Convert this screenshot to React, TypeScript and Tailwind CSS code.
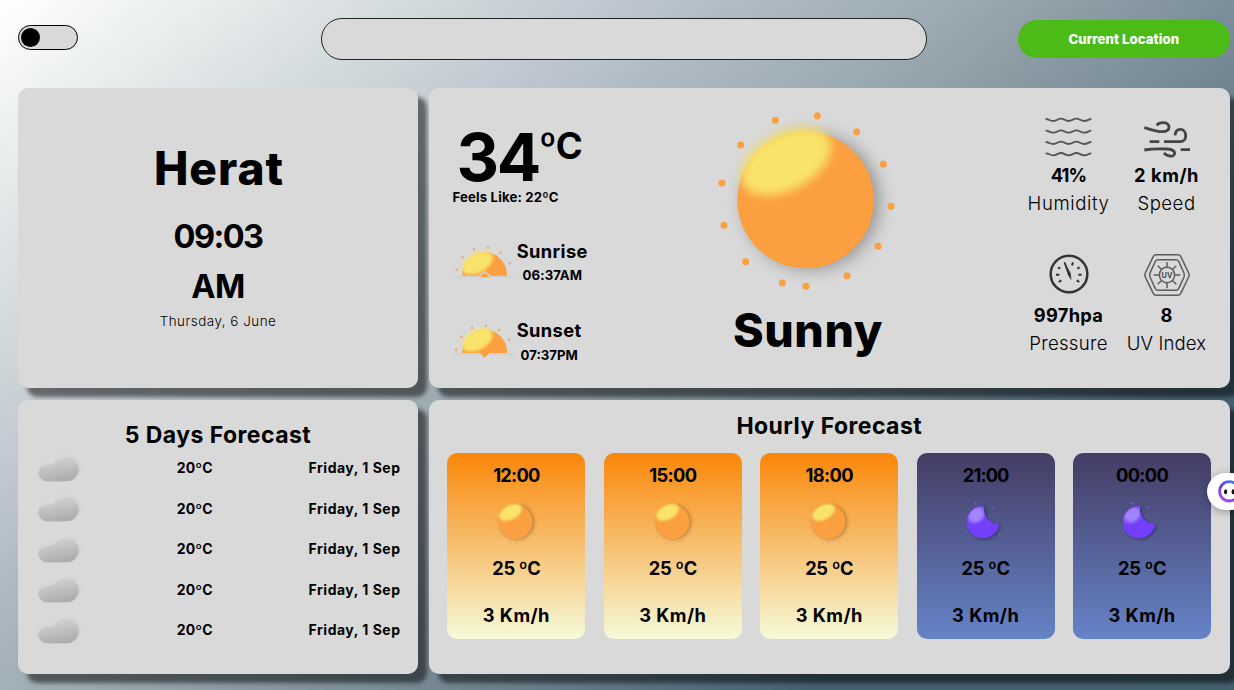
import React from "react";

type Size = { className?: string };

const SUN_RAYS: [number, number][] = [
  [226, 91], [352, 77], [470, 125], [550, 223], [573, 349], [534, 469],
  [441, 557], [318, 589], [247, 579], [137, 515], [72, 406], [66, 279], [122, 165],
];

function Sun({ id, className = "" }: Size & { id: string }) {
  return (
    <svg viewBox="24 30 600 600" className={className} aria-hidden="true">
      <defs>
        <filter id={`${id}-blur`} x="-40%" y="-40%" width="180%" height="180%">
          <feGaussianBlur stdDeviation="14" />
        </filter>
        <filter id={`${id}-shade`} x="-40%" y="-40%" width="180%" height="180%">
          <feGaussianBlur stdDeviation="26" />
        </filter>
      </defs>
      <circle cx="334" cy="334" r="202" fill="#000" opacity="0.34" filter={`url(#${id}-shade)`} />
      <circle cx="317" cy="330" r="205" fill="#fb9f41" />
      <ellipse cx="258" cy="214" rx="146" ry="86" fill="#f9e36b" transform="rotate(-28 258 214)" filter={`url(#${id}-blur)`} />
      {SUN_RAYS.map(([x, y]) => (
        <circle key={`${x}-${y}`} cx={x} cy={y} r="10.5" fill="#fb9f41" />
      ))}
    </svg>
  );
}

function Horizon({ id, rising, className = "" }: Size & { id: string; rising: boolean }) {
  const rays: [number, number][] = rising
    ? [[11, 74], [29, 37], [63, 13], [105, 8], [143, 23], [170, 55]]
    : [[9, 83], [25, 44], [57, 18], [99, 11], [139, 24], [168, 53]];
  const base = rising ? 92 : 93;
  return (
    <svg viewBox="0 0 188 110" className={className} aria-hidden="true">
      <defs>
        <filter id={`${id}-hl`} x="-40%" y="-40%" width="180%" height="180%">
          <feGaussianBlur stdDeviation="5" />
        </filter>
        <clipPath id={`${id}-clip`}>
          <rect x="0" y="-10" width="188" height={base + 10} />
        </clipPath>
      </defs>
      <path d={`M0 ${base + 3}H186`} stroke="#cdcdcf" strokeWidth="4" />
      <g clipPath={`url(#${id}-clip)`}>
        <circle cx="95" cy={base - 3} r="67" fill="#fb9f41" />
        <ellipse cx="73" cy="54" rx="50" ry="29" fill="#f9e36b" transform="rotate(-28 73 54)" filter={`url(#${id}-hl)`} />
      </g>
      {rays.map(([x, y]) => (
        <circle key={x} cx={x} cy={y} r="3.6" fill="#f3a562" />
      ))}
      {rising ? (
        <>
          <path d={`M76 ${base + 2}L95 ${base - 12}L114 ${base + 2}`} fill="#fb9f41" stroke="#dcd3c8" strokeWidth="5" />
          <path d={`M82 ${base + 5}L95 ${base - 4}L108 ${base + 5}Z`} fill="#fb9f41" />
        </>
      ) : (
        <path d={`M81 ${base}H109L95 ${base + 14}Z`} fill="#fb9f41" />
      )}
    </svg>
  );
}

function Moon({ id, className = "" }: Size & { id: string }) {
  return (
    <svg viewBox="214 320 150 150" className={className} aria-hidden="true">
      <defs>
        <filter id={`${id}-m`} x="-50%" y="-50%" width="200%" height="200%">
          <feGaussianBlur stdDeviation="5.5" />
        </filter>
        <clipPath id={`${id}-c`}>
          <path d="M284 347A48.5 48.5 0 1 0 328 400A43 43 0 0 1 284 347Z" />
        </clipPath>
      </defs>
      <path d="M284 347A48.5 48.5 0 1 0 328 400A43 43 0 0 1 284 347Z" transform="translate(5 4)" fill="#20204a" opacity="0.5" filter={`url(#${id}-m)`} />
      <path d="M284 347A48.5 48.5 0 1 0 328 400A43 43 0 0 1 284 347Z" fill="#743ffb" />
      <g clipPath={`url(#${id}-c)`}>
        <ellipse cx="260" cy="374" rx="27" ry="21" fill="#a385ff" transform="rotate(-40 260 374)" filter={`url(#${id}-m)`} />
      </g>
      <g fill="#7656d8">
        <circle cx="258" cy="339" r="3.6" />
        <circle cx="309" cy="351" r="3.4" />
        <circle cx="302" cy="377" r="2.4" />
        <circle cx="323" cy="378" r="2.4" />
        <circle cx="231" cy="424" r="3" />
        <circle cx="329" cy="432" r="3.2" />
      </g>
    </svg>
  );
}

function Cloud({ id, className = "" }: Size & { id: string }) {
  const shape = "M142 303A26 26 0 1 1 148 252C157 252 160 248 165 242A40 40 0 0 1 236 266C236 287 219 303 199 303Z";
  return (
    <svg viewBox="108 212 141 102" className={className} aria-hidden="true">
      <defs>
        <linearGradient id={`${id}-g`} x1="0.35" y1="0.05" x2="0.65" y2="1">
          <stop offset="0" stopColor="#d4d4d4" />
          <stop offset="1" stopColor="#ababab" />
        </linearGradient>
        <filter id={`${id}-b`} x="-30%" y="-30%" width="160%" height="160%">
          <feGaussianBlur stdDeviation="3" />
        </filter>
      </defs>
      <path d={shape} transform="translate(3 -1)" fill="#b9b9b9" opacity="0.45" filter={`url(#${id}-b)`} />
      <path d={shape} fill={`url(#${id}-g)`} />
      <path d="M122 262C128 254 136 252 148 252C157 252 160 248 165 242A40 40 0 0 1 230 247" fill="none" stroke="#e4e4e4" strokeWidth="2" opacity="0.8" />
    </svg>
  );
}

function HumidityIcon() {
  return (
    <svg viewBox="0 0 141 138" className="h-[46px] w-[47px]" fill="none" stroke="#555" strokeWidth="5.5" aria-hidden="true">
      {[23, 58, 92, 126].map((y) => (
        <path key={y} d={`M2 ${y - 2}C12 ${y - 2} 14 ${y + 4} 25 ${y + 4}S38 ${y - 3} 48 ${y - 3}S60 ${y + 4} 71 ${y + 4}S84 ${y - 3} 94 ${y - 3}S107 ${y + 4} 118 ${y + 4}S130 ${y - 2} 139 ${y - 2}`} />
      ))}
    </svg>
  );
}

function WindIcon() {
  return (
    <svg viewBox="431 336 138 138" className="size-[46px]" fill="none" stroke="#444" strokeWidth="8.5" strokeLinecap="butt" aria-hidden="true">
      <path d="M432 383C452 388 468 395 485 395C499 395 506 389 506 381C506 372 497 368 488 368C480 368 473 371 469 376" />
      <path d="M491 425H540C550 425 556 417 556 407C556 396 549 388 540 388C531 388 525 395 524 406" />
      <path d="M448 425H477M541 449H569" />
      <path d="M432 450C455 446 475 446 500 447C515 448 523 452 523 460C523 467 516 469 508 468C500 467 495 464 491 459" />
    </svg>
  );
}

function PressureIcon() {
  return (
    <svg viewBox="107 66 138 138" className="size-[46px]" fill="none" stroke="#333" aria-hidden="true">
      <circle cx="176" cy="132" r="55" strokeWidth="7.5" />
      <path d="M162 97L180 130L182 148L174 135Z" fill="#333" strokeWidth="2" strokeLinejoin="round" />
      <path d="M163 98L178 138" strokeWidth="5" />
      <path d="M143 112L150 116M137 134H147M145 156L153 151M188 97L185 106M208 112L201 116M214 134H204M207 156L199 151" strokeWidth="6" />
    </svg>
  );
}

function UvIcon() {
  return (
    <svg viewBox="402 63 138 138" className="size-[46px]" fill="none" stroke="#5c5c5c" strokeWidth="4.5" strokeLinejoin="round" aria-hidden="true">
      <path d="M438 71H504Q509 71 512 76L536 126Q539 132 536 138L512 188Q509 193 504 193H438Q433 193 430 188L406 138Q403 132 406 126L430 76Q433 71 438 71Z" />
      <path d="M444 86H498Q503 86 506 91L522 126Q524 132 522 138L506 173Q503 178 498 178H444Q439 178 436 173L420 138Q418 132 420 126L436 91Q439 86 444 86Z" />
      <circle cx="471" cy="132" r="23" />
      <path d="M471 93V109M471 155V172M431 132H448M494 132H511M443 104L454 115M499 104L488 115M443 160L454 149M499 160L488 149" />
      <text x="471" y="140" textAnchor="middle" fontFamily="Inter, sans-serif" fontSize="22" fontWeight="700" fill="#4a4a4a" stroke="none">UV</text>
    </svg>
  );
}

const CARD = "rounded-[10px] bg-[#d9d9d9] shadow-[9px_9px_4px_rgba(0,0,0,0.5)]";

function Metric({ icon, value, valueClass, label, labelClass }: {
  icon: React.ReactNode; value: string; valueClass: string; label: string; labelClass: string;
}) {
  return (
    <div className="flex flex-col items-center whitespace-nowrap">
      <div className="mb-[3px] flex h-[46px] items-center">{icon}</div>
      <div className={`text-[18.3px] leading-[28px] font-bold ${valueClass}`}>{value}</div>
      <div className={`text-[18.6px] leading-[28px] font-light ${labelClass}`}>{label}</div>
    </div>
  );
}

const HOURS = [
  { time: "12:00", night: false, track: "tracking-[-0.75px]" },
  { time: "15:00", night: false, track: "tracking-[-0.6px]" },
  { time: "18:00", night: false, track: "tracking-[-0.6px]" },
  { time: "21:00", night: true, track: "tracking-[-0.9px]" },
  { time: "00:00", night: true, track: "tracking-[-0.6px]" },
];

export default function App() {
  return (
    <div className="relative flex h-[690px] w-[1234px] flex-col overflow-hidden bg-[linear-gradient(142deg,#ffffff_0%,#ccd5d7_22.5%,#c4cbd4_27%,#abb8c0_37%,#9aa8b0_46%,#6f838f_64%,#456070_80%,#45606d_100%)] pr-[4.5px] pl-[18px] font-['Inter',sans-serif] text-black">
      <header className="flex h-[87.5px] shrink-0 items-start">
        <button aria-label="Toggle theme" className="mt-[25px] flex h-[25px] w-[60px] items-center rounded-full border border-black bg-[#d9d9d9] pl-[2px]">
          <span className="size-[18.5px] rounded-full bg-black" />
        </button>
        <input aria-label="City" className="mt-[18px] ml-[242.5px] h-[42px] w-[606.5px] rounded-full border border-[#222] bg-[#d9d9d9] px-6 outline-none" />
        <button className="mt-5 ml-auto h-[38px] w-[211.5px] rounded-full bg-[#4cbb17] text-[13.2px] leading-[37px] font-extrabold tracking-[0.05px] text-white">Current Location</button>
      </header>

      <main className="grid grid-cols-[400px_800.5px] grid-rows-[300.5px_273.5px] gap-x-[11px] gap-y-[12px]">
        <section className={`${CARD} flex flex-col items-center pt-[55.5px]`}>
          <h1 className="pl-[2px] text-[46px] leading-[50px] font-extrabold tracking-[1px]">Herat</h1>
          <div className="mt-[19px] text-[32.5px] leading-[50px] font-bold tracking-[-1.6px]">09:03</div>
          <div className="text-[32.5px] leading-[49px] font-bold tracking-[-0.5px]">AM</div>
          <div className="text-[13.4px] leading-[21px] font-light tracking-[0.5px]">Thursday, 6 June</div>
        </section>

        <section className={`${CARD} flex whitespace-nowrap`}>
          <div className="flex w-[221px] flex-col pl-[23.5px]">
            <div className="mt-[42px] flex h-[56px] items-start">
              <span className="pl-1 text-[66px] leading-[55px] font-bold tracking-[-2.4px]">34</span>
              <span className="text-[36.5px] leading-[33px] font-bold tracking-[-0.7px]">ºC</span>
            </div>
            <div className="mt-[1.5px] text-[13.2px] leading-[20px] font-bold tracking-[0.15px]">Feels Like: 22ºC</div>
            <div className="mt-[32px] flex">
              <Horizon id="rise" rising className="mt-[6px] h-[36.7px] w-[62.7px]" />
              <div className="ml-[1.5px] flex flex-col items-center">
                <span className="text-[18.3px] leading-[24px] font-bold tracking-[0.4px]">Sunrise</span>
                <span className="text-[13.2px] leading-[25px] font-bold tracking-[0.15px]">06:37AM</span>
              </div>
            </div>
            <div className="mt-[29.5px] flex">
              <Horizon id="set" rising={false} className="mt-[4px] h-[36.7px] w-[62.7px]" />
              <div className="ml-[1.5px] flex flex-col items-center">
                <span className="text-[18.3px] leading-[25px] font-bold tracking-[0.4px]">Sunset</span>
                <span className="text-[13.2px] leading-[25px] font-bold">07:37PM</span>
              </div>
            </div>
          </div>

          <div className="flex w-[316px] flex-col items-center pt-[12.5px]">
            <Sun id="sun-main" className="size-[200px]" />
            <div className="mt-[3px] text-[46.5px] leading-[54px] font-extrabold tracking-[0.6px]">Sunny</div>
          </div>

          <div className="ml-[53.5px] grid grid-cols-[98px_98px] grid-rows-[105px_105px] gap-y-[35px] pt-[24.5px]">
            <Metric icon={<HumidityIcon />} value="41%" valueClass="tracking-[-0.8px]" label="Humidity" labelClass="tracking-[0.6px]" />
            <Metric icon={<WindIcon />} value="2 km/h" valueClass="tracking-[0.6px]" label="Speed" labelClass="tracking-[0.5px]" />
            <Metric icon={<PressureIcon />} value="997hpa" valueClass="tracking-[0.3px]" label="Pressure" labelClass="tracking-[0.3px]" />
            <Metric icon={<UvIcon />} value="8" valueClass="" label="UV Index" labelClass="tracking-[0.1px]" />
          </div>
        </section>

        <section className={`${CARD} pt-[20.5px]`}>
          <h2 className="text-center text-[23px] leading-[28px] font-bold tracking-[0.45px]">5 Days Forecast</h2>
          <ul className="-mt-[1.1px]">
            {[0, 1, 2, 3, 4].map((n) => (
              <li key={n} className="flex h-[40.5px] items-center pr-[17.5px] pl-[18.3px] text-[14px] font-bold whitespace-nowrap">
                <Cloud id={`cloud-${n}`} className="h-[34px] w-[47px]" />
                <span className="ml-[93.5px] tracking-[0.15px]">20ºC</span>
                <span className="ml-auto tracking-[0.5px]">Friday, 1 Sep</span>
              </li>
            ))}
          </ul>
        </section>

        <section className={`${CARD} px-[18.3px] pt-[11.5px]`}>
          <h2 className="text-center text-[23px] leading-[28px] font-bold tracking-[0.45px]">Hourly Forecast</h2>
          <div className="mt-[13px] grid grid-cols-5 gap-x-[18.3px]">
            {HOURS.map(({ time, night, track }, i) => (
              <div key={time} className={`flex h-[186px] flex-col items-center rounded-[10px] pt-[10px] text-[18.3px] font-bold ${night ? "bg-[linear-gradient(#443d64,#6583c8)]" : "bg-[linear-gradient(#f98608,#f6fad9)]"}`}>
                <div className={`leading-[25px] ${track}`}>{time}</div>
                <div className="mt-[9.5px] flex h-[50px] items-center">
                  {night ? <Moon id={`moon-${i}`} className="size-[50px]" /> : <Sun id={`sun-${i}`} className="size-[50px]" />}
                </div>
                <div className={`leading-[25px] tracking-[-0.35px] ${night ? "mt-[9px]" : "mt-[8.5px]"}`}>25 ºC</div>
                <div className={`leading-[25px] tracking-[0.45px] ${night ? "mt-[22px]" : "mt-[22.5px]"}`}>3 Km/h</div>
              </div>
            ))}
          </div>
        </section>
      </main>

      <button aria-label="Assistant" className="absolute top-[473px] right-[-16px] h-[37px] w-[43.5px] rounded-full bg-white shadow-[0_2px_8px_rgba(0,0,0,0.3)]">
        <svg viewBox="0 0 44 37" className="h-[37px] w-[43.5px]" aria-hidden="true">
          <defs>
            <linearGradient id="ring" x1="0" y1="1" x2="0.8" y2="0">
              <stop offset="0" stopColor="#c152d8" />
              <stop offset="0.5" stopColor="#6a3fe0" />
              <stop offset="1" stopColor="#3d7df0" />
            </linearGradient>
          </defs>
          <circle cx="22.5" cy="18.3" r="9.8" fill="none" stroke="url(#ring)" strokeWidth="2.8" />
          <ellipse cx="18.8" cy="18.8" rx="1.6" ry="2.6" fill="#111" />
          <ellipse cx="26.4" cy="18.8" rx="1.6" ry="2.6" fill="#111" />
        </svg>
      </button>
    </div>
  );
}
